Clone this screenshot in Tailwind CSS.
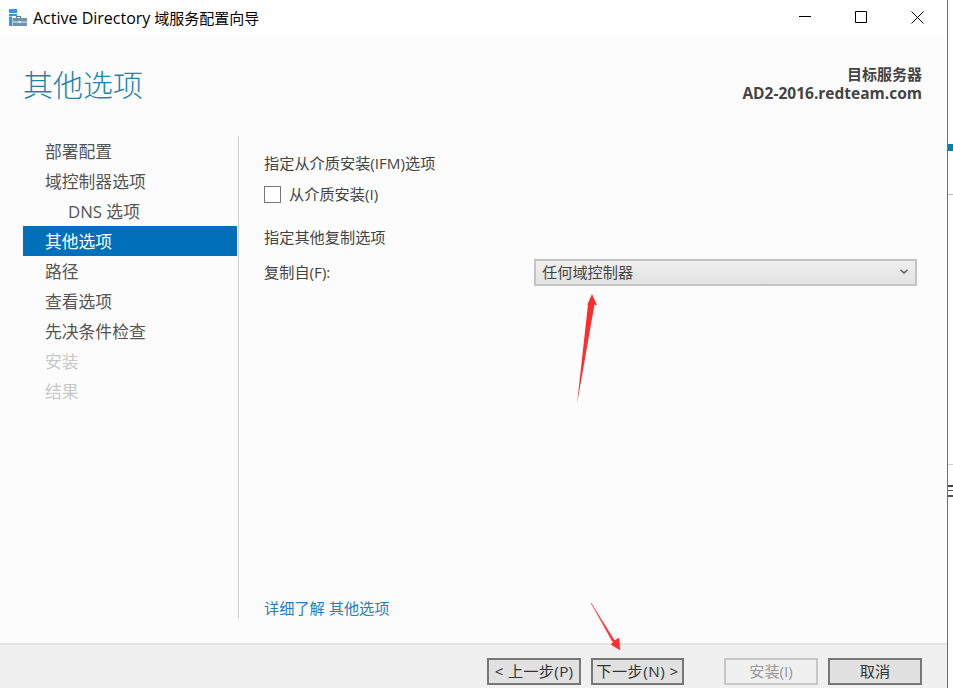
<!DOCTYPE html>
<html lang="zh-CN">
<head>
  <meta charset="UTF-8" />
  <title>Active Directory 域服务配置向导</title>
  <script src="https://cdn.jsdelivr.net/npm/@tailwindcss/browser@4"></script>
</head>
<body class="bg-white overflow-hidden font-['Open_Sans','Noto_Sans_CJK_SC',sans-serif] text-[15.200px] text-[#444]">
  <div class="relative flex w-[953px] h-[688px]">

    <!-- wizard window -->
    <div class="flex flex-col w-[948px] h-full border-r border-[#1a86d8]">
      <div class="flex items-center h-[37px] shrink-0 bg-white">
        <svg class="ml-[9px] mt-[-2px]" width="18" height="18" viewBox="0 0 18 18">
          <path fill="#2f9be8" d="M0 0h8v4H0zM0 5h8v2H0zM0 7.500h3V17H0z" />
          <path fill="none" stroke="#5b7f98" stroke-width="1.200" d="M7.500 9V7.500h4V9" />
          <path fill="#6f93ac" d="M3.500 9H18v8H3.500z" />
          <path fill="#dce8f0" d="M3.500 12.500H18v1H3.500zM9.500 12h2.500v2H9.500z" />
        </svg>
        <span class="ml-[6px] mt-[-2px] text-[15px] text-black"><span class="text-[16px]">Active Directory</span> 域服务配置向导</span>
        <div class="ml-auto flex items-center mr-[23px] mt-[-3px] gap-[44px]">
          <svg width="12" height="12" viewBox="0 0 12 12"><path stroke="#000" d="M0 5.500h12" /></svg>
          <svg width="12" height="12" viewBox="0 0 12 12"><path fill="none" stroke="#000" d="M.5.500h11v11H.5z" /></svg>
          <svg width="13" height="13" viewBox="0 0 13 13"><path stroke="#000" d="M.5.500l12 12M12.500.500l-12 12" /></svg>
        </div>
      </div>

      <div class="flex flex-col flex-1 min-h-0 bg-[#fcfcfc]">
        <div class="flex justify-between h-[99px] shrink-0 pl-[23px] pr-[25px]">
          <h1 class="mt-[26px] text-[30px] leading-[44px] font-light text-[#1f83ac]">其他选项</h1>
          <div class="mt-[28px] text-right leading-[19px] font-bold text-[#444]">
            <div class="text-[15px] font-['Liberation_Sans','Noto_Sans_CJK_SC',sans-serif]">目标服务器</div>
            <div class="text-[15.500px]">AD2-2016.redteam.com</div>
          </div>
        </div>

        <div class="flex flex-1 min-h-0 pb-[25px]">
          <nav class="flex flex-col w-[215px] ml-[23px] text-[16.800px] leading-[32px] text-[#555]">
            <div class="pl-[22px] h-[30px]">部署配置</div>
            <div class="pl-[22px] h-[30px]">域控制器选项</div>
            <div class="pl-[45px] h-[30px]">DNS 选项</div>
            <div class="pl-[22px] h-[30px] mr-[1px] bg-[#0070bb] text-white">其他选项</div>
            <div class="pl-[22px] h-[30px]">路径</div>
            <div class="pl-[22px] h-[30px]">查看选项</div>
            <div class="pl-[22px] h-[30px]">先决条件检查</div>
            <div class="pl-[22px] h-[30px] text-[#c8c8c8]">安装</div>
            <div class="pl-[22px] h-[30px] text-[#c8c8c8]">结果</div>
          </nav>

          <div class="flex flex-col flex-1 border-l border-[#cfcfcf] pl-[25px] pr-[30px]">
            <div class="mt-[16px] h-[22px] leading-[22px]">指定从介质安装(IFM)选项</div>
            <label class="flex items-center mt-[9px] h-[22px]">
              <span class="w-[17px] h-[17px] border border-[#777] bg-white"></span>
              <span class="ml-[8px]">从介质安装(I)</span>
            </label>
            <div class="mt-[21px] h-[22px] leading-[22px]">指定其他复制选项</div>
            <div class="flex items-center mt-[11px]">
              <span class="w-[270px]">复制自(F):</span>
              <div class="flex items-center justify-between w-[383px] h-[27px] px-[7px] border-2 border-[#c4c4c4] bg-linear-to-b from-[#f0f0f0] to-[#e2e2e2]">
                <span class="ml-[-1px]">任何域控制器</span>
                <svg class="mt-[-2px]" width="8" height="5" viewBox="0 0 8 5"><path fill="none" stroke="#666" stroke-width="1.600" d="M.5.800L4 4 7.500.800" /></svg>
              </div>
            </div>
            <a class="mt-auto mb-[-1px] h-[22px] leading-[22px] text-[#1f7ec4]" href="#">详细了解 其他选项</a>
          </div>
        </div>
      </div>

      <div class="flex items-start h-[45px] shrink-0 pt-[13px] pr-[25px] border-t-2 border-[#e4e4e4] bg-[#f0f0f0] justify-end text-[#333]">
        <button class="w-[94px] h-[27px] border-2 border-[#777] bg-[#e1e1e1] text-[15.200px] leading-none tracking-[0.3px]">&lt; 上一步(P)</button>
        <button class="w-[93px] h-[27px] ml-[10px] border-2 border-[#777] bg-[#e1e1e1] text-[15.200px] leading-none tracking-[0.5px]">下一步(N) &gt;</button>
        <button class="w-[94px] h-[27px] ml-[40px] border-2 border-[#c8c8c8] bg-[#f0f0f0] text-[15.200px] leading-none text-[#999]">安装(I)</button>
        <button class="w-[94px] h-[27px] ml-[10px] border-2 border-[#777] bg-[#e1e1e1] text-[15.200px] leading-none">取消</button>
      </div>
    </div>

    <!-- sliver of the window behind -->
    <div class="flex flex-col flex-1 bg-white">
      <div class="mt-[144px] h-[7px] bg-[#0a7fa8]"></div>
      <div class="mt-[43px] h-[1px] bg-[#bbb]"></div>
      <div class="mt-[269px] h-[1px] bg-[#ccc]"></div>
      <div class="mt-[20px] h-[2px] bg-[#444]"></div>
      <div class="mt-[3px] h-[1px] bg-[#555]"></div>
      <div class="mt-[4px] h-[2px] bg-[#555]"></div>
    </div>

    <!-- red annotation arrows -->
    <svg class="absolute inset-0 pointer-events-none" width="953" height="688" viewBox="0 0 953 688">
      <path fill="#fb2d2d" d="M577 404L588 304.500L587 305.500L592 294L597 305.500L594.500 304.500z" />
      <path fill="#fb2d2d" stroke="#fb2d2d" stroke-width=".4" d="M591 603L614.500 640.500L619 638L620 650L611 644.500L613 642.500z" />
    </svg>
  </div>
</body>
</html>
